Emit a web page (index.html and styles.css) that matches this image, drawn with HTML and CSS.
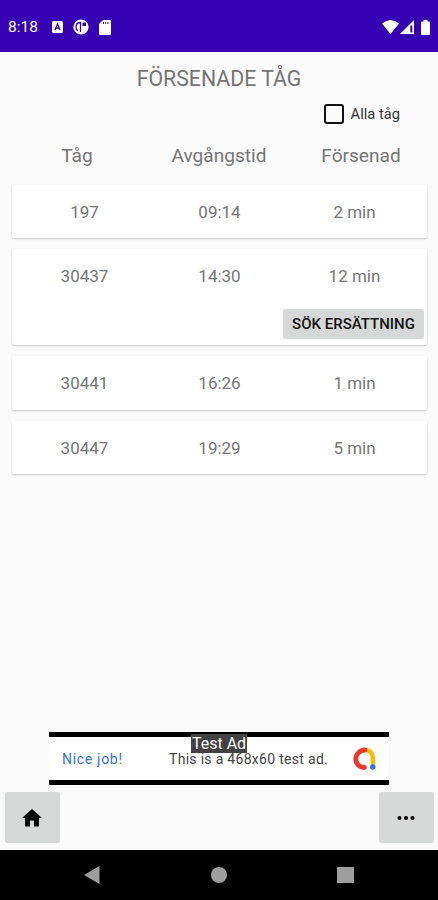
FILE: index.html
```html
<!DOCTYPE html>
<html lang="sv">
<head>
  <meta charset="UTF-8">
  <meta name="viewport" content="width=device-width, initial-scale=1.0">
  <title>Försenade tåg</title>
  <link rel="stylesheet" href="styles.css">
</head>
<body>
  <header class="status-bar">
    <span class="clock">8:18</span>
    <svg class="icon-a" width="11" height="12" viewBox="0 0 11 12">
      <rect width="11" height="12" rx="1.500" fill="#fff"/>
      <path d="M3 9l2.500-6L8 9M4 7h3" fill="none" stroke="#3700b3" stroke-width="1.300"/>
    </svg>
    <svg class="icon-p" width="16" height="16" viewBox="0 0 16 16">
      <circle cx="8" cy="8" r="7.600" fill="#fff"/>
      <path d="M7.500 13V3.500C4.500 3.500 3 5.500 3 8s1 3.500 2 4" fill="none" stroke="#3700b3" stroke-width="1.300"/>
      <path d="M9.500 3.500h3.500v3.500H9.500z" fill="#3700b3"/>
    </svg>
    <svg class="icon-sd" width="12" height="15" viewBox="0 0 12 15">
      <path d="M4 0h7a1 1 0 0 1 1 1v13a1 1 0 0 1-1 1H1a1 1 0 0 1-1-1V4z" fill="#fff"/>
      <path d="M4.500 2v2M6.700 2v2M8.900 2v2" stroke="#3700b3" stroke-width="1"/>
    </svg>
    <div class="status-right">
      <svg width="17" height="14" viewBox="0 0 18 14" preserveAspectRatio="none">
        <path d="M0 3.500Q9-3.500 18 3.500L9 14z" fill="#fff"/>
      </svg>
      <svg class="signal" width="14" height="14" viewBox="0 0 14 14">
        <path d="M14 0v14H0z" fill="#fff"/>
        <path d="M10.300 5.500h2v7h-2z" fill="#3700b3"/>
      </svg>
      <svg class="battery" width="9" height="15" viewBox="0 0 9 15">
        <path d="M2.500 0h4v1.500H8a1 1 0 0 1 1 1V14a1 1 0 0 1-1 1H1a1 1 0 0 1-1-1V2.500a1 1 0 0 1 1-1h1.500z" fill="#fff"/>
      </svg>
    </div>
  </header>

  <main class="content">
    <h1>FÖRSENADE TÅG</h1>

    <label class="all-trains">
      <input type="checkbox">
      <span>Alla tåg</span>
    </label>

    <div class="columns">
      <span>Tåg</span>
      <span>Avgångstid</span>
      <span>Försenad</span>
    </div>

    <div class="trains">
      <div class="card">
        <div class="row"><span>197</span><span>09:14</span><span>2 min</span></div>
      </div>
      <div class="card tall">
        <div class="row"><span>30437</span><span>14:30</span><span>12 min</span></div>
        <button class="claim">SÖK ERSÄTTNING</button>
      </div>
      <div class="card">
        <div class="row"><span>30441</span><span>16:26</span><span>1 min</span></div>
      </div>
      <div class="card">
        <div class="row"><span>30447</span><span>19:29</span><span>5 min</span></div>
      </div>
    </div>
  </main>

  <div class="ad">
    <span class="ad-title">Nice job!</span>
    <span class="ad-text">This is a 468x60 test ad.</span>
    <svg class="ad-logo" width="23" height="24" viewBox="0 0 23 24">
      <path d="M12 3C17 3 19.800 6.500 19.800 11v8" fill="none" stroke="#fbbc04" stroke-width="4.600"/>
      <path d="M11.500 20.500C6 20.500 2.800 16.500 2.800 12S6.500 3 12 3" fill="none" stroke="#ea3a2d" stroke-width="4.800" stroke-linecap="round"/>
      <circle cx="19.800" cy="20" r="2.700" fill="#2f73e8"/>
    </svg>
    <span class="ad-badge">Test Ad</span>
  </div>

  <div class="actions">
    <button class="action" aria-label="Hem">
      <svg width="20" height="18" viewBox="0 0 20 18">
        <path d="M10 0l10 9h-3v8.500h-5v-6H8v6H3V9H0z" fill="#000"/>
      </svg>
    </button>
    <button class="action" aria-label="Mer">
      <svg width="18" height="6" viewBox="0 0 18 6">
        <circle cx="2.500" cy="3" r="2.100"/>
        <circle cx="9" cy="3" r="2.100"/>
        <circle cx="15.500" cy="3" r="2.100"/>
      </svg>
    </button>
  </div>

  <nav class="nav-bar">
    <svg width="16" height="18" viewBox="0 0 16 18"><path d="M15.500 0v18L0 9z"/></svg>
    <svg width="16" height="16" viewBox="0 0 16 16"><circle cx="8" cy="8" r="8"/></svg>
    <svg width="17" height="16" viewBox="0 0 17 16"><rect width="17" height="16" rx="0.500"/></svg>
  </nav>
</body>
</html>
```

FILE: styles.css
```css
* {
  box-sizing: border-box;
}

body {
  margin: 0;
  height: 900px;
  display: flex;
  flex-direction: column;
  font-family: Roboto, sans-serif;
  background: #fafafa;
  color: #757575;
  overflow: hidden;
}

svg {
  display: block;
  flex: none;
}

button {
  border: none;
  border-radius: 2px;
  background: #d6d7d7;
  color: #111;
  font-family: inherit;
  padding: 0;
}

.status-bar {
  height: 52px;
  flex: none;
  display: flex;
  align-items: center;
  padding: 2px 8px 0;
  background: #3700b3;
  color: #fff;
}

.clock {
  width: 44px;
  font-size: 15.5px;
}

.icon-p {
  margin-left: 10px;
}

.icon-sd {
  margin-left: 10px;
}

.status-right {
  display: flex;
  align-items: center;
  margin-left: auto;
}

.signal {
  margin-left: 1px;
}

.battery {
  margin-left: 7px;
}

.content {
  flex: 1;
}

h1 {
  margin: 14px 0 0;
  font-size: 21.3px;
  line-height: 26px;
  font-weight: 400;
  text-align: center;
}

.all-trains {
  display: flex;
  align-items: center;
  justify-content: flex-end;
  height: 20px;
  margin-top: 12px;
  padding-right: 38px;
  font-size: 14.7px;
  color: #333;
}

.all-trains input {
  appearance: none;
  width: 20px;
  height: 20px;
  margin: 0 7px 0 0;
  border: 2px solid #111;
  border-radius: 3px;
}

.columns {
  display: flex;
  margin-top: 20px;
  padding: 0 6px;
  font-size: 19.1px;
  line-height: 24px;
}

.columns span,
.row span {
  flex: 1;
  text-align: center;
}

.trains {
  display: flex;
  flex-direction: column;
  gap: 11px;
  padding: 17px 11px 0 12px;
}

.card {
  height: 53.4px;
  background: #fff;
  border-radius: 2px;
  box-shadow: 0 1px 2px rgba(0, 0, 0, 0.2);
}

.card.tall {
  height: 96px;
}

.row {
  display: flex;
  padding: 0 5px;
  font-size: 17px;
  line-height: 54px;
}

.claim {
  display: block;
  width: 141px;
  height: 30px;
  margin: 6px 3px 0 auto;
  font-size: 15px;
  font-weight: 500;
}

.ad {
  position: relative;
  flex: none;
  display: flex;
  align-items: center;
  width: 340px;
  height: 53px;
  margin-left: 49px;
  padding: 0 13px;
  border-top: 5px solid #000;
  border-bottom: 5px solid #000;
  background: #fff;
  font-size: 14px;
}

.ad-title {
  width: 107px;
  color: #3275e5;
  letter-spacing: 0.7px;
}

.ad-text {
  color: #444;
  letter-spacing: 0.3px;
}

.ad-logo {
  margin-left: auto;
}

.ad-badge {
  position: absolute;
  top: -3px;
  left: 142px;
  width: 56px;
  height: 19px;
  background: #424242;
  color: #fff;
  font-size: 16px;
  line-height: 19px;
  text-align: center;
  white-space: nowrap;
}

.actions {
  flex: none;
  display: flex;
  justify-content: space-between;
  padding: 7px 4px 7px 5px;
}

.action {
  display: flex;
  align-items: center;
  justify-content: center;
  width: 55px;
  height: 51px;
  padding-right: 1px;
}

.nav-bar {
  flex: none;
  display: flex;
  align-items: center;
  justify-content: space-between;
  height: 50px;
  padding: 0 84px;
  background: #000;
  fill: #9e9e9e;
}
```
